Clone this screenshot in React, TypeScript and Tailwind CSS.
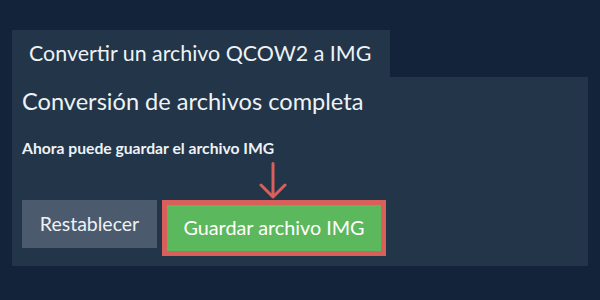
import React from "react";

export default function App() {
  return (
    <div
      className="w-[600px] h-[300px] bg-[#12233a] pt-[30px] px-[12px]"
      style={{ fontFamily: "Lato, 'Noto Sans', sans-serif" }}
    >
      <div className="flex h-[47px] w-[378px] items-center bg-[#223549] pl-[17px] text-[21.4px] text-[#eef2f5]">
        Convertir un archivo QCOW2 a IMG
      </div>
      <div className="h-[189px] w-[576px] bg-[#223549] px-[10px] pt-[9px]">
        <div className="text-[23.6px] leading-[30px] text-[#eef2f5]">Conversión de archivos completa</div>
        <div className="mt-[22px] text-[15.7px] font-bold leading-[20px] text-[#eef2f5]">
          Ahora puede guardar el archivo IMG
        </div>
        <div className="ml-[237px] mt-[4px] h-[38px] w-[28px]">
          <svg width="28" height="38" viewBox="0 0 28 38">
            <path
              d="M14 1.5 V35 M2 23 L14 35 L26 23"
              fill="none"
              stroke="#d9605a"
              strokeWidth="3"
              strokeLinecap="round"
              strokeLinejoin="round"
            />
          </svg>
        </div>
        <div className="flex items-start gap-[5px]">
          <button className="h-[48px] w-[135px] bg-[#4b5b6d] text-[19.5px] text-[#eef2f5]">Restablecer</button>
          <div className="h-[56px] w-[224px] border-[5px] border-[#d9605a] bg-[#5cb85c] flex items-center justify-center text-[19.8px] text-white">
            Guardar archivo IMG
          </div>
        </div>
      </div>
    </div>
  );
}
